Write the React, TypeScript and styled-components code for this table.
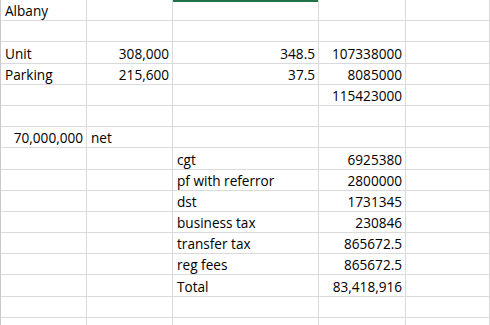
import styled, { createGlobalStyle } from "styled-components";

const GlobalStyle = createGlobalStyle`
  html, body {
    margin: 0;
    padding: 0;
    background: #ffffff;
    overflow: hidden;
  }
`;

const Sheet = styled.div`
  display: grid;
  grid-template-columns: 86px 86px 146px 87px 1fr;
  grid-auto-rows: 21.2px;
  width: 490px;
  height: 325px;
  overflow: hidden;
  border-left: 1px solid #c9c9c9;
  box-sizing: border-box;
  font-family: "Open Sans", Lato, sans-serif;
  font-size: 13.6px;
  color: #000;
`;

const Cell = styled.div<{ align?: "left" | "right"; selected?: boolean }>`
  box-sizing: border-box;
  border-right: 1px solid #dadada;
  border-bottom: 1px solid #dadada;
  display: flex;
  align-items: flex-end;
  justify-content: ${({ align }) => (align === "right" ? "flex-end" : "flex-start")};
  padding: 0 3px 1px 4px;
  white-space: nowrap;
  overflow: hidden;
  line-height: 16px;
  box-shadow: ${({ selected }) => (selected ? "inset 0 2px 0 #217346" : "none")};
`;

type CellData = { text?: string; align?: "left" | "right" };

const rows: CellData[][] = [
  [{ text: "Albany" }, {}, {}, {}, {}],
  [{}, {}, {}, {}, {}],
  [{ text: "Unit" }, { text: "308,000", align: "right" }, { text: "348.5", align: "right" }, { text: "107338000", align: "right" }, {}],
  [{ text: "Parking" }, { text: "215,600", align: "right" }, { text: "37.5", align: "right" }, { text: "8085000", align: "right" }, {}],
  [{}, {}, {}, { text: "115423000", align: "right" }, {}],
  [{}, {}, {}, {}, {}],
  [{ text: "70,000,000", align: "right" }, { text: "net" }, {}, {}, {}],
  [{}, {}, { text: "cgt" }, { text: "6925380", align: "right" }, {}],
  [{}, {}, { text: "pf with referror" }, { text: "2800000", align: "right" }, {}],
  [{}, {}, { text: "dst" }, { text: "1731345", align: "right" }, {}],
  [{}, {}, { text: "business tax" }, { text: "230846", align: "right" }, {}],
  [{}, {}, { text: "transfer tax" }, { text: "865672.5", align: "right" }, {}],
  [{}, {}, { text: "reg fees" }, { text: "865672.5", align: "right" }, {}],
  [{}, {}, { text: "Total" }, { text: "83,418,916", align: "right" }, {}],
  [{}, {}, {}, {}, {}],
  [{}, {}, {}, {}, {}],
];

const App = () => {
  return (
    <>
      <GlobalStyle />
      <Sheet>
        {rows.map((row, r) =>
          row.map((cell, c) => (
            <Cell key={`${r}-${c}`} align={cell.align} selected={r === 0 && c === 2}>
              {cell.text}
            </Cell>
          ))
        )}
      </Sheet>
    </>
  );
};

export default App;
